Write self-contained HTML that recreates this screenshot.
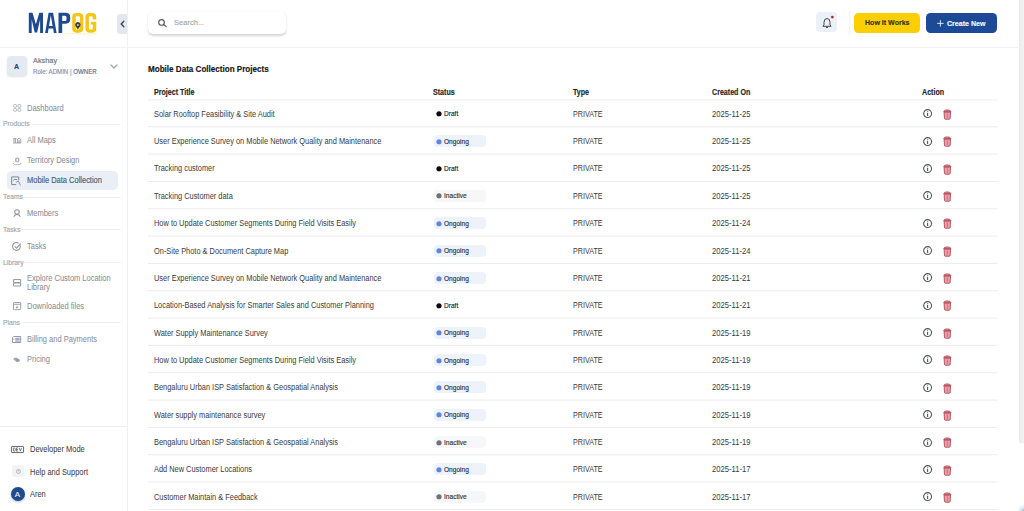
<!DOCTYPE html>
<html><head><meta charset="utf-8">
<style>
*{box-sizing:border-box;margin:0;padding:0}
html,body{width:1024px;height:511px;overflow:hidden;background:#fff;font-family:"Liberation Sans", sans-serif}
.a{position:absolute}
.t{position:absolute;white-space:nowrap;transform-origin:0 50%;-webkit-text-stroke:0.15px currentColor}
svg{overflow:visible}
</style></head><body>
<div class="a" style="left:127px;top:0;width:1px;height:511px;background:#f1f1f1"></div>
<div class="a" style="left:0;top:46.5px;width:127px;height:1px;background:#f2f2f2"></div>
<div class="a" style="left:128px;top:46.5px;width:890px;height:1px;background:#f2f2f2"></div>
<svg class="a" style="left:0;top:0" width="128" height="46" viewBox="0 0 128 46">
<path fill="#1f4a90" d="M28.8,33 L28.8,12.8 L32.5,12.8 L35.9,24.2 L39.3,12.8 L43,12.8 L43,33 L40.1,33 L40.1,19.5 L37.1,32.6 L34.7,32.6 L31.7,19.5 L31.7,33 Z"/>
<path fill="#1f4a90" fill-rule="evenodd" d="M45.1,33 L48.6,12.8 L53.1,12.8 L56.6,33 L53.8,33 L53.2,28.4 L48.5,28.4 L47.9,33 Z M49,26 L52.6,26 L50.8,15.3 Z"/>
<path fill="#1f4a90" fill-rule="evenodd" d="M58.5,33 V12.8 H65.7 Q70.2,12.8 70.2,17.4 V19.1 Q70.2,23.7 65.7,23.7 H62.2 V33 Z M62.2,15.7 H65 Q66.5,15.7 66.5,17.2 V19.4 Q66.5,20.9 65,20.9 H62.2 Z"/>
<path fill="#f5c518" fill-rule="evenodd" d="M76.3,13 H79.2 Q83.3,13 83.3,17.1 V28.6 Q83.3,32.7 79.2,32.7 H76.3 Q72.2,32.7 72.2,28.6 V17.1 Q72.2,13 76.3,13 Z M76.8,16.3 Q75.7,16.3 75.7,17.4 V28.3 Q75.7,29.4 76.8,29.4 H78.7 Q79.8,29.4 79.8,28.3 V17.4 Q79.8,16.3 78.7,16.3 Z"/>
<path fill="#f5c518" d="M96.3,19.5 V17.1 Q96.3,13 92.2,13 H89.5 Q85.4,13 85.4,17.1 V28.6 Q85.4,32.7 89.5,32.7 H92.2 Q96.3,32.7 96.3,28.6 V21.8 H90.8 V24.6 H92.8 V28.3 Q92.8,29.4 91.7,29.4 H90 Q88.9,29.4 88.9,28.3 V17.4 Q88.9,16.3 90,16.3 H91.7 Q92.8,16.3 92.8,17.4 V19.5 Z"/>
<path fill="#3c3c3c" d="M77.9,29.4 L75.6,26.3 A2.7,2.7 0 1 1 80.2,26.3 Z"/>
<circle cx="77.9" cy="24.9" r="0.95" fill="#d8d8d8"/>
<rect x="63" y="33.6" width="34" height="0.6" fill="#f3e3a0"/>
</svg>
<div class="a" style="left:117px;top:13.5px;width:10px;height:20px;background:#e3e7ef;border-radius:3px 0 0 3px"></div>
<svg class="a" style="left:119.5px;top:19.5px" width="5" height="8" viewBox="0 0 5 8"><path d="M3.8 1.2L1.2 4l2.6 2.8" stroke="#3c3f45" stroke-width="1.3" fill="none" stroke-linecap="round"/></svg>
<div class="a" style="left:6.9px;top:56px;width:20.6px;height:20px;border-radius:4px;background:#e5eaf2;box-shadow:0 1px 2px rgba(0,0,0,.12)"></div>
<div class="t" style="left:14.16px;top:63.24px;font-size:7.40px;line-height:7.40px;color:#2a4672;font-weight:bold;transform:scaleX(0.95);">A</div>
<div class="t" style="left:33.04px;top:56.58px;font-size:7.70px;line-height:7.70px;color:#6e727a;transform:scaleX(0.955);">Akshay</div>
<div class="t" style="left:33.12px;top:68.58px;font-size:6.40px;line-height:6.40px;color:#8c9097;transform:scaleX(0.955);">Role: ADMIN | <span style="color:#4a7196">OWNER</span></div>
<svg class="a" style="left:110px;top:63.8px" width="8" height="5" viewBox="0 0 8 5"><path d="M1 1l3 3 3-3" stroke="#a3a7ad" stroke-width="1.35" fill="none" stroke-linecap="round"/></svg>
<svg class="a" style="left:12.5px;top:104.2px" width="8.4" height="7.8" viewBox="0 0 8.4 7.8"><g fill="none" stroke="#9ea3aa" stroke-width="0.8"><rect x="0.6" y="0.5" width="2.9" height="2.8" rx="1"/><rect x="4.9" y="0.5" width="2.9" height="2.8" rx="1"/><rect x="0.6" y="4.5" width="2.9" height="2.8" rx="1"/><rect x="4.9" y="4.5" width="2.9" height="2.8" rx="1"/></g></svg>
<div class="t" style="left:26.76px;top:104.66px;font-size:8.20px;line-height:8.20px;color:#8a8e94;transform:scaleX(0.915);-webkit-text-stroke:0.05px currentColor;">Dashboard</div>
<div class="t" style="left:3.47px;top:121.49px;font-size:7.10px;line-height:7.10px;color:#a3a7ad;transform:scaleX(0.955);">Products</div>
<div class="a" style="left:32px;top:124.0px;width:88.6px;height:1px;background:#efefef"></div>
<svg class="a" style="left:12.6px;top:137.4px" width="8.4" height="6.4" viewBox="0 0 8.4 6.4"><g fill="none" stroke="#8f949b" stroke-width="0.8"><path d="M0.2 6h8M0.3 1.7h3.2M1 1.7v4.3M2.5 1.7v4.3M4.5 2.2v3.8M7.8 2.2v3.8M4.3 2.4q1.9-2.6 3.7 0"/><path d="M5.7 3.4v2.6M6.6 3.4v2.6" stroke-width="0.6"/></g></svg>
<div class="t" style="left:26.76px;top:137.06px;font-size:8.20px;line-height:8.20px;color:#8a8e94;transform:scaleX(0.915);-webkit-text-stroke:0.05px currentColor;">All Maps</div>
<svg class="a" style="left:12.7px;top:156.5px" width="8.4" height="8" viewBox="0 0 8.4 8"><g fill="#b0b4ba"><circle cx="4.2" cy="3" r="2.4"/></g><circle cx="4.2" cy="3" r="0.9" fill="#fff"/><path d="M1.3 5.6c-1.6 0.8-0.9 2.2 2.9 2.2s4.5-1.4 2.9-2.2" fill="none" stroke="#a8acb2" stroke-width="0.9"/></svg>
<div class="t" style="left:26.76px;top:157.06px;font-size:8.20px;line-height:8.20px;color:#8a8e94;transform:scaleX(0.915);-webkit-text-stroke:0.05px currentColor;">Territory Design</div>
<div class="a" style="left:6.9px;top:171px;width:111.2px;height:19.4px;border-radius:4.5px;background:#eaeff6"></div>
<svg class="a" style="left:11px;top:175.5px" width="11" height="10" viewBox="0 0 11 10"><g fill="none" stroke="#7d8799" stroke-width="1"><path d="M5.2 8.6H0.7V0.9h7v3.6"/><path d="M2.3 4.3l1.6-0.9 2.2 0.3"/><path d="M5.3 6.6l1.4-1.6 1.6 1.4v1.5l1.6 1.5"/></g></svg>
<div class="t" style="left:26.76px;top:176.86px;font-size:8.20px;line-height:8.20px;color:#465e80;transform:scaleX(0.915);">Mobile Data Collection</div>
<div class="t" style="left:3.47px;top:194.09px;font-size:7.10px;line-height:7.10px;color:#a3a7ad;transform:scaleX(0.955);">Teams</div>
<div class="a" style="left:24.4px;top:196.5px;width:96.19999999999999px;height:1px;background:#efefef"></div>
<svg class="a" style="left:12.5px;top:209px" width="8.2" height="8.2" viewBox="0 0 8.2 8.2"><g fill="none" stroke="#8e9298" stroke-width="1.05"><circle cx="4" cy="3.1" r="2.3"/><path d="M0.8 7.8q0.9-2.2 3.2-2.4t3.4 2.4"/></g></svg>
<div class="t" style="left:26.76px;top:209.66px;font-size:8.20px;line-height:8.20px;color:#8a8e94;transform:scaleX(0.915);-webkit-text-stroke:0.05px currentColor;">Members</div>
<div class="t" style="left:3.47px;top:226.89px;font-size:7.10px;line-height:7.10px;color:#a3a7ad;transform:scaleX(0.955);">Tasks</div>
<div class="a" style="left:20.6px;top:228.9px;width:100.0px;height:1px;background:#efefef"></div>
<svg class="a" style="left:11.9px;top:241.9px" width="9.4" height="8.8" viewBox="0 0 9.4 8.8"><g fill="none" stroke="#8f949b" stroke-width="1.1"><path d="M8.2 3.4A3.9 3.9 0 1 1 6.6 1.2"/><path d="M2.8 4.4l1.7 1.7 4.2-4.4"/></g></svg>
<div class="t" style="left:26.76px;top:243.16px;font-size:8.20px;line-height:8.20px;color:#8a8e94;transform:scaleX(0.915);-webkit-text-stroke:0.05px currentColor;">Tasks</div>
<div class="t" style="left:3.47px;top:259.69px;font-size:7.10px;line-height:7.10px;color:#a3a7ad;transform:scaleX(0.955);">Library</div>
<div class="a" style="left:24.4px;top:261.75px;width:96.19999999999999px;height:1px;background:#efefef"></div>
<svg class="a" style="left:12.5px;top:279px" width="8.2" height="7.6" viewBox="0 0 8.2 7.6"><g fill="none" stroke="#959aa1" stroke-width="1.05"><rect x="0.5" y="0.5" width="7.2" height="3" rx="0.9"/><rect x="0.5" y="4.1" width="7.2" height="3" rx="0.9"/></g></svg>
<div class="t" style="left:26.76px;top:274.96px;font-size:8.20px;line-height:8.20px;color:#8a8e94;transform:scaleX(0.915);-webkit-text-stroke:0.05px currentColor;">Explore Custom Location</div>
<div class="t" style="left:26.76px;top:283.76px;font-size:8.20px;line-height:8.20px;color:#8a8e94;transform:scaleX(0.915);-webkit-text-stroke:0.05px currentColor;">Library</div>
<svg class="a" style="left:12.5px;top:302.2px" width="8.2" height="8.2" viewBox="0 0 8.2 8.2"><g fill="none" stroke="#989da4" stroke-width="0.95"><rect x="0.5" y="0.5" width="7.2" height="7.2" rx="0.6"/><path d="M0.5 2.3h7.2M4.1 3.6v2.6M3 5.1l1.1 1.1 1.1-1.1"/></g></svg>
<div class="t" style="left:26.76px;top:302.66px;font-size:8.20px;line-height:8.20px;color:#8a8e94;transform:scaleX(0.915);-webkit-text-stroke:0.05px currentColor;">Downloaded files</div>
<div class="t" style="left:3.47px;top:319.99px;font-size:7.10px;line-height:7.10px;color:#a3a7ad;transform:scaleX(0.955);">Plans</div>
<div class="a" style="left:22.5px;top:322.25px;width:98.1px;height:1px;background:#efefef"></div>
<svg class="a" style="left:11.9px;top:335.9px" width="9.2" height="7" viewBox="0 0 9.2 7"><g fill="none" stroke="#878ba6" stroke-width="0.9"><path d="M0.5 1.6V6.5h8.2V0.5H2"/><path d="M0.5 1.6L1.8 0.5M3.3 2.3h4.4M3.3 3.7h4.4M3.3 5.1h4.4M1.2 3.2h1.2"/></g></svg>
<div class="t" style="left:26.76px;top:336.16px;font-size:8.20px;line-height:8.20px;color:#8a8e94;transform:scaleX(0.915);-webkit-text-stroke:0.05px currentColor;">Billing and Payments</div>
<svg class="a" style="left:13px;top:356.5px" width="7.2" height="5.2" viewBox="0 0 7.2 5.2"><g fill="#a8acb2"><ellipse cx="2.8" cy="2" rx="2.4" ry="1.6"/><ellipse cx="4.6" cy="3.3" rx="2.4" ry="1.6" fill="#9a9ea4"/></g></svg>
<div class="t" style="left:26.76px;top:355.86px;font-size:8.20px;line-height:8.20px;color:#8a8e94;transform:scaleX(0.915);-webkit-text-stroke:0.05px currentColor;">Pricing</div>
<div class="a" style="left:0;top:426.3px;width:127px;height:1px;background:#efefef"></div>
<svg class="a" style="left:11.3px;top:445.6px" width="13" height="7" viewBox="0 0 13 7"><g fill="none" stroke="#55575b" stroke-width="0.9"><rect x="0.45" y="0.45" width="12.1" height="6.1" rx="0.6"/><path d="M2.4 1.9v3.2h0.9q1.1 0 1.1-1.6t-1.1-1.6z M7.1 1.9H5.5v3.2h1.6M5.5 3.5h1.4 M8.3 1.9l1.1 3.2 1.1-3.2" stroke-width="0.75"/></g></svg>
<div class="t" style="left:29.51px;top:445.76px;font-size:8.20px;line-height:8.20px;color:#3f4145;transform:scaleX(0.91);-webkit-text-stroke:0.05px currentColor;">Developer Mode</div>
<div class="a" style="left:12px;top:465.3px;width:12px;height:12px;border-radius:2.5px;background:#f2f3f5"></div>
<svg class="a" style="left:15.6px;top:468.9px" width="4.8" height="4.8" viewBox="0 0 4.8 4.8"><g fill="none" stroke="#9a9ea4" stroke-width="0.7"><circle cx="2.4" cy="2.4" r="2"/><path d="M2.4 1.1v1.4"/></g></svg>
<div class="t" style="left:29.51px;top:468.66px;font-size:8.20px;line-height:8.20px;color:#3f4145;transform:scaleX(0.91);-webkit-text-stroke:0.05px currentColor;">Help and Support</div>
<div class="a" style="left:11.3px;top:487.3px;width:14px;height:14px;border-radius:50%;background:#1f4a8c;box-shadow:0 1px 2.5px rgba(31,74,140,.35)"></div>
<div class="t" style="left:14.82px;top:491.03px;font-size:8.00px;line-height:8.00px;color:#e6ecf5;">A</div>
<div class="t" style="left:30.11px;top:490.86px;font-size:8.20px;line-height:8.20px;color:#3e4044;transform:scaleX(0.91);-webkit-text-stroke:0.05px currentColor;">Aren</div>
<div class="a" style="left:147.8px;top:12.25px;width:138.2px;height:22.2px;border-radius:5px;background:#fff;box-shadow:0 1.2px 2.2px rgba(0,0,0,.16),0 0 0.6px rgba(0,0,0,.08)"></div>
<svg class="a" style="left:158px;top:19.3px" width="9" height="8" viewBox="0 0 9 8"><g fill="none" stroke="#55585e" stroke-width="1.15"><circle cx="3.5" cy="3.4" r="2.8"/><path d="M5.6 5.5L8.2 7.6" stroke-linecap="round"/></g></svg>
<div class="t" style="left:173.93px;top:19.31px;font-size:7.90px;line-height:7.90px;color:#a3a6ab;transform:scaleX(0.955);">Search...</div>
<div class="a" style="left:816.4px;top:12.4px;width:21.1px;height:20px;border-radius:4px;background:#ecf0f9"></div>
<svg class="a" style="left:822px;top:17.2px" width="10" height="11" viewBox="0 0 10 11"><g fill="none" stroke="#45484e" stroke-width="1" stroke-linejoin="round"><path d="M0.9 9.3L2 7.9V5.4Q2 1.5 5 1.5Q8 1.5 8 5.4V7.9L9.1 9.3Z"/><path d="M4 10.3Q5 11 6 10.3"/></g></svg>
<svg class="a" style="left:830px;top:15px" width="5" height="5" viewBox="0 0 5 5"><circle cx="2.35" cy="2.1" r="1.4" fill="#a8283f"/></svg>
<div class="a" style="left:848.5px;top:10.7px;width:0.8px;height:24px;background:#f1f1f1"></div>
<div class="a" style="left:854px;top:13px;width:66.2px;height:19.7px;border-radius:4.5px;background:#fdcf02"></div>
<div class="t" style="left:864.65px;top:19.25px;font-size:7.50px;line-height:7.50px;color:#33302a;font-weight:bold;transform:scaleX(0.94);">How It Works</div>
<div class="a" style="left:926.1px;top:12.6px;width:70.6px;height:20.3px;border-radius:4.5px;background:#1c4a97"></div>
<svg class="a" style="left:937.2px;top:19.5px" width="6.8" height="6.8" viewBox="0 0 6.8 6.8"><path d="M3.4 0.2v6.4M0.2 3.4h6.4" stroke="#e8eef8" stroke-width="0.9"/></svg>
<div class="t" style="left:947.45px;top:19.55px;font-size:7.50px;line-height:7.50px;color:#f4f7fc;font-weight:bold;transform:scaleX(0.94);">Create New</div>
<div class="t" style="left:148.29px;top:64.60px;font-size:8.50px;line-height:8.50px;color:#161616;font-weight:bold;transform:scaleX(0.95);">Mobile Data Collection Projects</div>
<div class="t" style="left:153.51px;top:88.66px;font-size:8.20px;line-height:8.20px;color:#262626;font-weight:bold;transform:scaleX(0.868);">Project Title</div>
<div class="t" style="left:433.21px;top:88.66px;font-size:8.20px;line-height:8.20px;color:#262626;font-weight:bold;transform:scaleX(0.868);">Status</div>
<div class="t" style="left:572.81px;top:88.66px;font-size:8.20px;line-height:8.20px;color:#262626;font-weight:bold;transform:scaleX(0.868);">Type</div>
<div class="t" style="left:712.21px;top:88.66px;font-size:8.20px;line-height:8.20px;color:#262626;font-weight:bold;transform:scaleX(0.868);">Created On</div>
<div class="t" style="left:921.71px;top:88.66px;font-size:8.20px;line-height:8.20px;color:#262626;font-weight:bold;transform:scaleX(0.868);">Action</div>
<div class="t" style="left:153.50px;top:109.77px;font-size:8.30px;line-height:8.30px;color:#3a3a3a;transform:scaleX(0.893);-webkit-text-stroke:0px currentColor;">Solar Rooftop Feasibility &amp; Site Audit</div>
<svg class="a" style="left:436px;top:111.40px" width="6" height="6" viewBox="0 0 6 6"><circle cx="3" cy="2.75" r="2.6" fill="#0a0a0a"/></svg>
<div class="t" style="left:444.16px;top:110.38px;font-size:7.35px;line-height:7.35px;color:#1a1a1a;transform:scaleX(0.895);">Draft</div>
<div class="t" style="left:572.80px;top:109.77px;font-size:8.30px;line-height:8.30px;color:#3a3a3a;transform:scaleX(0.862);-webkit-text-stroke:0px currentColor;">PRIVATE</div>
<div class="t" style="left:712.20px;top:109.77px;font-size:8.30px;line-height:8.30px;color:#3a3a3a;transform:scaleX(0.92);-webkit-text-stroke:0px currentColor;">2025-11-25</div>
<svg class="a" style="left:922.9px;top:109.20px" width="9.2" height="9.2" viewBox="0 0 9.2 9.2"><g fill="none" stroke="#505358" stroke-width="1.1"><circle cx="4.6" cy="4.6" r="3.95"/><path d="M4.6 4.1v2.8"/></g><circle cx="4.6" cy="2.75" r="0.6" fill="#505358"/></svg>
<svg class="a" style="left:942.6px;top:108.90px" width="8.6" height="10.6" viewBox="0 0 8.6 10.6"><path d="M0.7 2.7Q0.9 0.9 4.3 0.9Q7.7 0.9 7.9 2.7Z" fill="#d88893" stroke="#ad4453" stroke-width="0.85" stroke-linejoin="round"/><path d="M1.1 3.1H7.5L7.1 9.5Q7 10.2 6.3 10.2H2.3Q1.6 10.2 1.5 9.5Z" fill="#eaa2ab" stroke="#b44a5a" stroke-width="0.95" stroke-linejoin="round"/><path d="M4.3 4.4V8.9" stroke="#c86473" stroke-width="0.9"/></svg>
<div class="t" style="left:153.50px;top:137.13px;font-size:8.30px;line-height:8.30px;color:#3a3a3a;transform:scaleX(0.893);-webkit-text-stroke:0px currentColor;">User Experience Survey on Mobile Network Quality and Maintenance</div>
<div class="a" style="left:433.8px;top:135.16px;width:52px;height:12px;border-radius:4px;background:#eef2fb"></div>
<svg class="a" style="left:436px;top:138.76px" width="6" height="6" viewBox="0 0 6 6"><circle cx="3" cy="2.75" r="2.6" fill="#5b88dc"/></svg>
<div class="t" style="left:444.16px;top:137.74px;font-size:7.35px;line-height:7.35px;color:#2a3242;transform:scaleX(0.895);">Ongoing</div>
<div class="t" style="left:572.80px;top:137.13px;font-size:8.30px;line-height:8.30px;color:#3a3a3a;transform:scaleX(0.862);-webkit-text-stroke:0px currentColor;">PRIVATE</div>
<div class="t" style="left:712.20px;top:137.13px;font-size:8.30px;line-height:8.30px;color:#3a3a3a;transform:scaleX(0.92);-webkit-text-stroke:0px currentColor;">2025-11-25</div>
<svg class="a" style="left:922.9px;top:136.56px" width="9.2" height="9.2" viewBox="0 0 9.2 9.2"><g fill="none" stroke="#505358" stroke-width="1.1"><circle cx="4.6" cy="4.6" r="3.95"/><path d="M4.6 4.1v2.8"/></g><circle cx="4.6" cy="2.75" r="0.6" fill="#505358"/></svg>
<svg class="a" style="left:942.6px;top:136.26px" width="8.6" height="10.6" viewBox="0 0 8.6 10.6"><path d="M0.7 2.7Q0.9 0.9 4.3 0.9Q7.7 0.9 7.9 2.7Z" fill="#d88893" stroke="#ad4453" stroke-width="0.85" stroke-linejoin="round"/><path d="M1.1 3.1H7.5L7.1 9.5Q7 10.2 6.3 10.2H2.3Q1.6 10.2 1.5 9.5Z" fill="#eaa2ab" stroke="#b44a5a" stroke-width="0.95" stroke-linejoin="round"/><path d="M4.3 4.4V8.9" stroke="#c86473" stroke-width="0.9"/></svg>
<div class="t" style="left:153.50px;top:164.49px;font-size:8.30px;line-height:8.30px;color:#3a3a3a;transform:scaleX(0.893);-webkit-text-stroke:0px currentColor;">Tracking customer</div>
<svg class="a" style="left:436px;top:166.12px" width="6" height="6" viewBox="0 0 6 6"><circle cx="3" cy="2.75" r="2.6" fill="#0a0a0a"/></svg>
<div class="t" style="left:444.16px;top:165.10px;font-size:7.35px;line-height:7.35px;color:#1a1a1a;transform:scaleX(0.895);">Draft</div>
<div class="t" style="left:572.80px;top:164.49px;font-size:8.30px;line-height:8.30px;color:#3a3a3a;transform:scaleX(0.862);-webkit-text-stroke:0px currentColor;">PRIVATE</div>
<div class="t" style="left:712.20px;top:164.49px;font-size:8.30px;line-height:8.30px;color:#3a3a3a;transform:scaleX(0.92);-webkit-text-stroke:0px currentColor;">2025-11-25</div>
<svg class="a" style="left:922.9px;top:163.92px" width="9.2" height="9.2" viewBox="0 0 9.2 9.2"><g fill="none" stroke="#505358" stroke-width="1.1"><circle cx="4.6" cy="4.6" r="3.95"/><path d="M4.6 4.1v2.8"/></g><circle cx="4.6" cy="2.75" r="0.6" fill="#505358"/></svg>
<svg class="a" style="left:942.6px;top:163.62px" width="8.6" height="10.6" viewBox="0 0 8.6 10.6"><path d="M0.7 2.7Q0.9 0.9 4.3 0.9Q7.7 0.9 7.9 2.7Z" fill="#d88893" stroke="#ad4453" stroke-width="0.85" stroke-linejoin="round"/><path d="M1.1 3.1H7.5L7.1 9.5Q7 10.2 6.3 10.2H2.3Q1.6 10.2 1.5 9.5Z" fill="#eaa2ab" stroke="#b44a5a" stroke-width="0.95" stroke-linejoin="round"/><path d="M4.3 4.4V8.9" stroke="#c86473" stroke-width="0.9"/></svg>
<div class="t" style="left:153.50px;top:191.85px;font-size:8.30px;line-height:8.30px;color:#3a3a3a;transform:scaleX(0.893);-webkit-text-stroke:0px currentColor;">Tracking Customer data</div>
<div class="a" style="left:433.8px;top:189.88px;width:52px;height:12px;border-radius:4px;background:#f6f7f9"></div>
<svg class="a" style="left:436px;top:193.48px" width="6" height="6" viewBox="0 0 6 6"><circle cx="3" cy="2.75" r="2.6" fill="#6d7178"/></svg>
<div class="t" style="left:444.16px;top:192.46px;font-size:7.35px;line-height:7.35px;color:#333;transform:scaleX(0.895);">Inactive</div>
<div class="t" style="left:572.80px;top:191.85px;font-size:8.30px;line-height:8.30px;color:#3a3a3a;transform:scaleX(0.862);-webkit-text-stroke:0px currentColor;">PRIVATE</div>
<div class="t" style="left:712.20px;top:191.85px;font-size:8.30px;line-height:8.30px;color:#3a3a3a;transform:scaleX(0.92);-webkit-text-stroke:0px currentColor;">2025-11-25</div>
<svg class="a" style="left:922.9px;top:191.28px" width="9.2" height="9.2" viewBox="0 0 9.2 9.2"><g fill="none" stroke="#505358" stroke-width="1.1"><circle cx="4.6" cy="4.6" r="3.95"/><path d="M4.6 4.1v2.8"/></g><circle cx="4.6" cy="2.75" r="0.6" fill="#505358"/></svg>
<svg class="a" style="left:942.6px;top:190.98px" width="8.6" height="10.6" viewBox="0 0 8.6 10.6"><path d="M0.7 2.7Q0.9 0.9 4.3 0.9Q7.7 0.9 7.9 2.7Z" fill="#d88893" stroke="#ad4453" stroke-width="0.85" stroke-linejoin="round"/><path d="M1.1 3.1H7.5L7.1 9.5Q7 10.2 6.3 10.2H2.3Q1.6 10.2 1.5 9.5Z" fill="#eaa2ab" stroke="#b44a5a" stroke-width="0.95" stroke-linejoin="round"/><path d="M4.3 4.4V8.9" stroke="#c86473" stroke-width="0.9"/></svg>
<div class="t" style="left:153.50px;top:219.21px;font-size:8.30px;line-height:8.30px;color:#3a3a3a;transform:scaleX(0.893);-webkit-text-stroke:0px currentColor;">How to Update Customer Segments During Field Visits Easily</div>
<div class="a" style="left:433.8px;top:217.24px;width:52px;height:12px;border-radius:4px;background:#eef2fb"></div>
<svg class="a" style="left:436px;top:220.84px" width="6" height="6" viewBox="0 0 6 6"><circle cx="3" cy="2.75" r="2.6" fill="#5b88dc"/></svg>
<div class="t" style="left:444.16px;top:219.82px;font-size:7.35px;line-height:7.35px;color:#2a3242;transform:scaleX(0.895);">Ongoing</div>
<div class="t" style="left:572.80px;top:219.21px;font-size:8.30px;line-height:8.30px;color:#3a3a3a;transform:scaleX(0.862);-webkit-text-stroke:0px currentColor;">PRIVATE</div>
<div class="t" style="left:712.20px;top:219.21px;font-size:8.30px;line-height:8.30px;color:#3a3a3a;transform:scaleX(0.92);-webkit-text-stroke:0px currentColor;">2025-11-24</div>
<svg class="a" style="left:922.9px;top:218.64px" width="9.2" height="9.2" viewBox="0 0 9.2 9.2"><g fill="none" stroke="#505358" stroke-width="1.1"><circle cx="4.6" cy="4.6" r="3.95"/><path d="M4.6 4.1v2.8"/></g><circle cx="4.6" cy="2.75" r="0.6" fill="#505358"/></svg>
<svg class="a" style="left:942.6px;top:218.34px" width="8.6" height="10.6" viewBox="0 0 8.6 10.6"><path d="M0.7 2.7Q0.9 0.9 4.3 0.9Q7.7 0.9 7.9 2.7Z" fill="#d88893" stroke="#ad4453" stroke-width="0.85" stroke-linejoin="round"/><path d="M1.1 3.1H7.5L7.1 9.5Q7 10.2 6.3 10.2H2.3Q1.6 10.2 1.5 9.5Z" fill="#eaa2ab" stroke="#b44a5a" stroke-width="0.95" stroke-linejoin="round"/><path d="M4.3 4.4V8.9" stroke="#c86473" stroke-width="0.9"/></svg>
<div class="t" style="left:153.50px;top:246.57px;font-size:8.30px;line-height:8.30px;color:#3a3a3a;transform:scaleX(0.893);-webkit-text-stroke:0px currentColor;">On-Site Photo &amp; Document Capture Map</div>
<div class="a" style="left:433.8px;top:244.60px;width:52px;height:12px;border-radius:4px;background:#eef2fb"></div>
<svg class="a" style="left:436px;top:248.20px" width="6" height="6" viewBox="0 0 6 6"><circle cx="3" cy="2.75" r="2.6" fill="#5b88dc"/></svg>
<div class="t" style="left:444.16px;top:247.18px;font-size:7.35px;line-height:7.35px;color:#2a3242;transform:scaleX(0.895);">Ongoing</div>
<div class="t" style="left:572.80px;top:246.57px;font-size:8.30px;line-height:8.30px;color:#3a3a3a;transform:scaleX(0.862);-webkit-text-stroke:0px currentColor;">PRIVATE</div>
<div class="t" style="left:712.20px;top:246.57px;font-size:8.30px;line-height:8.30px;color:#3a3a3a;transform:scaleX(0.92);-webkit-text-stroke:0px currentColor;">2025-11-24</div>
<svg class="a" style="left:922.9px;top:246.00px" width="9.2" height="9.2" viewBox="0 0 9.2 9.2"><g fill="none" stroke="#505358" stroke-width="1.1"><circle cx="4.6" cy="4.6" r="3.95"/><path d="M4.6 4.1v2.8"/></g><circle cx="4.6" cy="2.75" r="0.6" fill="#505358"/></svg>
<svg class="a" style="left:942.6px;top:245.70px" width="8.6" height="10.6" viewBox="0 0 8.6 10.6"><path d="M0.7 2.7Q0.9 0.9 4.3 0.9Q7.7 0.9 7.9 2.7Z" fill="#d88893" stroke="#ad4453" stroke-width="0.85" stroke-linejoin="round"/><path d="M1.1 3.1H7.5L7.1 9.5Q7 10.2 6.3 10.2H2.3Q1.6 10.2 1.5 9.5Z" fill="#eaa2ab" stroke="#b44a5a" stroke-width="0.95" stroke-linejoin="round"/><path d="M4.3 4.4V8.9" stroke="#c86473" stroke-width="0.9"/></svg>
<div class="t" style="left:153.50px;top:273.93px;font-size:8.30px;line-height:8.30px;color:#3a3a3a;transform:scaleX(0.893);-webkit-text-stroke:0px currentColor;">User Experience Survey on Mobile Network Quality and Maintenance</div>
<div class="a" style="left:433.8px;top:271.96px;width:52px;height:12px;border-radius:4px;background:#eef2fb"></div>
<svg class="a" style="left:436px;top:275.56px" width="6" height="6" viewBox="0 0 6 6"><circle cx="3" cy="2.75" r="2.6" fill="#5b88dc"/></svg>
<div class="t" style="left:444.16px;top:274.54px;font-size:7.35px;line-height:7.35px;color:#2a3242;transform:scaleX(0.895);">Ongoing</div>
<div class="t" style="left:572.80px;top:273.93px;font-size:8.30px;line-height:8.30px;color:#3a3a3a;transform:scaleX(0.862);-webkit-text-stroke:0px currentColor;">PRIVATE</div>
<div class="t" style="left:712.20px;top:273.93px;font-size:8.30px;line-height:8.30px;color:#3a3a3a;transform:scaleX(0.92);-webkit-text-stroke:0px currentColor;">2025-11-21</div>
<svg class="a" style="left:922.9px;top:273.36px" width="9.2" height="9.2" viewBox="0 0 9.2 9.2"><g fill="none" stroke="#505358" stroke-width="1.1"><circle cx="4.6" cy="4.6" r="3.95"/><path d="M4.6 4.1v2.8"/></g><circle cx="4.6" cy="2.75" r="0.6" fill="#505358"/></svg>
<svg class="a" style="left:942.6px;top:273.06px" width="8.6" height="10.6" viewBox="0 0 8.6 10.6"><path d="M0.7 2.7Q0.9 0.9 4.3 0.9Q7.7 0.9 7.9 2.7Z" fill="#d88893" stroke="#ad4453" stroke-width="0.85" stroke-linejoin="round"/><path d="M1.1 3.1H7.5L7.1 9.5Q7 10.2 6.3 10.2H2.3Q1.6 10.2 1.5 9.5Z" fill="#eaa2ab" stroke="#b44a5a" stroke-width="0.95" stroke-linejoin="round"/><path d="M4.3 4.4V8.9" stroke="#c86473" stroke-width="0.9"/></svg>
<div class="t" style="left:153.50px;top:301.29px;font-size:8.30px;line-height:8.30px;color:#3a3a3a;transform:scaleX(0.893);-webkit-text-stroke:0px currentColor;">Location-Based Analysis for Smarter Sales and Customer Planning</div>
<svg class="a" style="left:436px;top:302.92px" width="6" height="6" viewBox="0 0 6 6"><circle cx="3" cy="2.75" r="2.6" fill="#0a0a0a"/></svg>
<div class="t" style="left:444.16px;top:301.90px;font-size:7.35px;line-height:7.35px;color:#1a1a1a;transform:scaleX(0.895);">Draft</div>
<div class="t" style="left:572.80px;top:301.29px;font-size:8.30px;line-height:8.30px;color:#3a3a3a;transform:scaleX(0.862);-webkit-text-stroke:0px currentColor;">PRIVATE</div>
<div class="t" style="left:712.20px;top:301.29px;font-size:8.30px;line-height:8.30px;color:#3a3a3a;transform:scaleX(0.92);-webkit-text-stroke:0px currentColor;">2025-11-21</div>
<svg class="a" style="left:922.9px;top:300.72px" width="9.2" height="9.2" viewBox="0 0 9.2 9.2"><g fill="none" stroke="#505358" stroke-width="1.1"><circle cx="4.6" cy="4.6" r="3.95"/><path d="M4.6 4.1v2.8"/></g><circle cx="4.6" cy="2.75" r="0.6" fill="#505358"/></svg>
<svg class="a" style="left:942.6px;top:300.42px" width="8.6" height="10.6" viewBox="0 0 8.6 10.6"><path d="M0.7 2.7Q0.9 0.9 4.3 0.9Q7.7 0.9 7.9 2.7Z" fill="#d88893" stroke="#ad4453" stroke-width="0.85" stroke-linejoin="round"/><path d="M1.1 3.1H7.5L7.1 9.5Q7 10.2 6.3 10.2H2.3Q1.6 10.2 1.5 9.5Z" fill="#eaa2ab" stroke="#b44a5a" stroke-width="0.95" stroke-linejoin="round"/><path d="M4.3 4.4V8.9" stroke="#c86473" stroke-width="0.9"/></svg>
<div class="t" style="left:153.50px;top:328.65px;font-size:8.30px;line-height:8.30px;color:#3a3a3a;transform:scaleX(0.893);-webkit-text-stroke:0px currentColor;">Water Supply Maintenance Survey</div>
<div class="a" style="left:433.8px;top:326.68px;width:52px;height:12px;border-radius:4px;background:#eef2fb"></div>
<svg class="a" style="left:436px;top:330.28px" width="6" height="6" viewBox="0 0 6 6"><circle cx="3" cy="2.75" r="2.6" fill="#5b88dc"/></svg>
<div class="t" style="left:444.16px;top:329.26px;font-size:7.35px;line-height:7.35px;color:#2a3242;transform:scaleX(0.895);">Ongoing</div>
<div class="t" style="left:572.80px;top:328.65px;font-size:8.30px;line-height:8.30px;color:#3a3a3a;transform:scaleX(0.862);-webkit-text-stroke:0px currentColor;">PRIVATE</div>
<div class="t" style="left:712.20px;top:328.65px;font-size:8.30px;line-height:8.30px;color:#3a3a3a;transform:scaleX(0.92);-webkit-text-stroke:0px currentColor;">2025-11-19</div>
<svg class="a" style="left:922.9px;top:328.08px" width="9.2" height="9.2" viewBox="0 0 9.2 9.2"><g fill="none" stroke="#505358" stroke-width="1.1"><circle cx="4.6" cy="4.6" r="3.95"/><path d="M4.6 4.1v2.8"/></g><circle cx="4.6" cy="2.75" r="0.6" fill="#505358"/></svg>
<svg class="a" style="left:942.6px;top:327.78px" width="8.6" height="10.6" viewBox="0 0 8.6 10.6"><path d="M0.7 2.7Q0.9 0.9 4.3 0.9Q7.7 0.9 7.9 2.7Z" fill="#d88893" stroke="#ad4453" stroke-width="0.85" stroke-linejoin="round"/><path d="M1.1 3.1H7.5L7.1 9.5Q7 10.2 6.3 10.2H2.3Q1.6 10.2 1.5 9.5Z" fill="#eaa2ab" stroke="#b44a5a" stroke-width="0.95" stroke-linejoin="round"/><path d="M4.3 4.4V8.9" stroke="#c86473" stroke-width="0.9"/></svg>
<div class="t" style="left:153.50px;top:356.01px;font-size:8.30px;line-height:8.30px;color:#3a3a3a;transform:scaleX(0.893);-webkit-text-stroke:0px currentColor;">How to Update Customer Segments During Field Visits Easily</div>
<div class="a" style="left:433.8px;top:354.04px;width:52px;height:12px;border-radius:4px;background:#eef2fb"></div>
<svg class="a" style="left:436px;top:357.64px" width="6" height="6" viewBox="0 0 6 6"><circle cx="3" cy="2.75" r="2.6" fill="#5b88dc"/></svg>
<div class="t" style="left:444.16px;top:356.62px;font-size:7.35px;line-height:7.35px;color:#2a3242;transform:scaleX(0.895);">Ongoing</div>
<div class="t" style="left:572.80px;top:356.01px;font-size:8.30px;line-height:8.30px;color:#3a3a3a;transform:scaleX(0.862);-webkit-text-stroke:0px currentColor;">PRIVATE</div>
<div class="t" style="left:712.20px;top:356.01px;font-size:8.30px;line-height:8.30px;color:#3a3a3a;transform:scaleX(0.92);-webkit-text-stroke:0px currentColor;">2025-11-19</div>
<svg class="a" style="left:922.9px;top:355.44px" width="9.2" height="9.2" viewBox="0 0 9.2 9.2"><g fill="none" stroke="#505358" stroke-width="1.1"><circle cx="4.6" cy="4.6" r="3.95"/><path d="M4.6 4.1v2.8"/></g><circle cx="4.6" cy="2.75" r="0.6" fill="#505358"/></svg>
<svg class="a" style="left:942.6px;top:355.14px" width="8.6" height="10.6" viewBox="0 0 8.6 10.6"><path d="M0.7 2.7Q0.9 0.9 4.3 0.9Q7.7 0.9 7.9 2.7Z" fill="#d88893" stroke="#ad4453" stroke-width="0.85" stroke-linejoin="round"/><path d="M1.1 3.1H7.5L7.1 9.5Q7 10.2 6.3 10.2H2.3Q1.6 10.2 1.5 9.5Z" fill="#eaa2ab" stroke="#b44a5a" stroke-width="0.95" stroke-linejoin="round"/><path d="M4.3 4.4V8.9" stroke="#c86473" stroke-width="0.9"/></svg>
<div class="t" style="left:153.50px;top:383.37px;font-size:8.30px;line-height:8.30px;color:#3a3a3a;transform:scaleX(0.893);-webkit-text-stroke:0px currentColor;">Bengaluru Urban ISP Satisfaction &amp; Geospatial Analysis</div>
<div class="a" style="left:433.8px;top:381.40px;width:52px;height:12px;border-radius:4px;background:#eef2fb"></div>
<svg class="a" style="left:436px;top:385.00px" width="6" height="6" viewBox="0 0 6 6"><circle cx="3" cy="2.75" r="2.6" fill="#5b88dc"/></svg>
<div class="t" style="left:444.16px;top:383.98px;font-size:7.35px;line-height:7.35px;color:#2a3242;transform:scaleX(0.895);">Ongoing</div>
<div class="t" style="left:572.80px;top:383.37px;font-size:8.30px;line-height:8.30px;color:#3a3a3a;transform:scaleX(0.862);-webkit-text-stroke:0px currentColor;">PRIVATE</div>
<div class="t" style="left:712.20px;top:383.37px;font-size:8.30px;line-height:8.30px;color:#3a3a3a;transform:scaleX(0.92);-webkit-text-stroke:0px currentColor;">2025-11-19</div>
<svg class="a" style="left:922.9px;top:382.80px" width="9.2" height="9.2" viewBox="0 0 9.2 9.2"><g fill="none" stroke="#505358" stroke-width="1.1"><circle cx="4.6" cy="4.6" r="3.95"/><path d="M4.6 4.1v2.8"/></g><circle cx="4.6" cy="2.75" r="0.6" fill="#505358"/></svg>
<svg class="a" style="left:942.6px;top:382.50px" width="8.6" height="10.6" viewBox="0 0 8.6 10.6"><path d="M0.7 2.7Q0.9 0.9 4.3 0.9Q7.7 0.9 7.9 2.7Z" fill="#d88893" stroke="#ad4453" stroke-width="0.85" stroke-linejoin="round"/><path d="M1.1 3.1H7.5L7.1 9.5Q7 10.2 6.3 10.2H2.3Q1.6 10.2 1.5 9.5Z" fill="#eaa2ab" stroke="#b44a5a" stroke-width="0.95" stroke-linejoin="round"/><path d="M4.3 4.4V8.9" stroke="#c86473" stroke-width="0.9"/></svg>
<div class="t" style="left:153.50px;top:410.73px;font-size:8.30px;line-height:8.30px;color:#3a3a3a;transform:scaleX(0.893);-webkit-text-stroke:0px currentColor;">Water supply maintenance survey</div>
<div class="a" style="left:433.8px;top:408.76px;width:52px;height:12px;border-radius:4px;background:#eef2fb"></div>
<svg class="a" style="left:436px;top:412.36px" width="6" height="6" viewBox="0 0 6 6"><circle cx="3" cy="2.75" r="2.6" fill="#5b88dc"/></svg>
<div class="t" style="left:444.16px;top:411.34px;font-size:7.35px;line-height:7.35px;color:#2a3242;transform:scaleX(0.895);">Ongoing</div>
<div class="t" style="left:572.80px;top:410.73px;font-size:8.30px;line-height:8.30px;color:#3a3a3a;transform:scaleX(0.862);-webkit-text-stroke:0px currentColor;">PRIVATE</div>
<div class="t" style="left:712.20px;top:410.73px;font-size:8.30px;line-height:8.30px;color:#3a3a3a;transform:scaleX(0.92);-webkit-text-stroke:0px currentColor;">2025-11-19</div>
<svg class="a" style="left:922.9px;top:410.16px" width="9.2" height="9.2" viewBox="0 0 9.2 9.2"><g fill="none" stroke="#505358" stroke-width="1.1"><circle cx="4.6" cy="4.6" r="3.95"/><path d="M4.6 4.1v2.8"/></g><circle cx="4.6" cy="2.75" r="0.6" fill="#505358"/></svg>
<svg class="a" style="left:942.6px;top:409.86px" width="8.6" height="10.6" viewBox="0 0 8.6 10.6"><path d="M0.7 2.7Q0.9 0.9 4.3 0.9Q7.7 0.9 7.9 2.7Z" fill="#d88893" stroke="#ad4453" stroke-width="0.85" stroke-linejoin="round"/><path d="M1.1 3.1H7.5L7.1 9.5Q7 10.2 6.3 10.2H2.3Q1.6 10.2 1.5 9.5Z" fill="#eaa2ab" stroke="#b44a5a" stroke-width="0.95" stroke-linejoin="round"/><path d="M4.3 4.4V8.9" stroke="#c86473" stroke-width="0.9"/></svg>
<div class="t" style="left:153.50px;top:438.09px;font-size:8.30px;line-height:8.30px;color:#3a3a3a;transform:scaleX(0.893);-webkit-text-stroke:0px currentColor;">Bengaluru Urban ISP Satisfaction &amp; Geospatial Analysis</div>
<div class="a" style="left:433.8px;top:436.12px;width:52px;height:12px;border-radius:4px;background:#f6f7f9"></div>
<svg class="a" style="left:436px;top:439.72px" width="6" height="6" viewBox="0 0 6 6"><circle cx="3" cy="2.75" r="2.6" fill="#6d7178"/></svg>
<div class="t" style="left:444.16px;top:438.70px;font-size:7.35px;line-height:7.35px;color:#333;transform:scaleX(0.895);">Inactive</div>
<div class="t" style="left:572.80px;top:438.09px;font-size:8.30px;line-height:8.30px;color:#3a3a3a;transform:scaleX(0.862);-webkit-text-stroke:0px currentColor;">PRIVATE</div>
<div class="t" style="left:712.20px;top:438.09px;font-size:8.30px;line-height:8.30px;color:#3a3a3a;transform:scaleX(0.92);-webkit-text-stroke:0px currentColor;">2025-11-19</div>
<svg class="a" style="left:922.9px;top:437.52px" width="9.2" height="9.2" viewBox="0 0 9.2 9.2"><g fill="none" stroke="#505358" stroke-width="1.1"><circle cx="4.6" cy="4.6" r="3.95"/><path d="M4.6 4.1v2.8"/></g><circle cx="4.6" cy="2.75" r="0.6" fill="#505358"/></svg>
<svg class="a" style="left:942.6px;top:437.22px" width="8.6" height="10.6" viewBox="0 0 8.6 10.6"><path d="M0.7 2.7Q0.9 0.9 4.3 0.9Q7.7 0.9 7.9 2.7Z" fill="#d88893" stroke="#ad4453" stroke-width="0.85" stroke-linejoin="round"/><path d="M1.1 3.1H7.5L7.1 9.5Q7 10.2 6.3 10.2H2.3Q1.6 10.2 1.5 9.5Z" fill="#eaa2ab" stroke="#b44a5a" stroke-width="0.95" stroke-linejoin="round"/><path d="M4.3 4.4V8.9" stroke="#c86473" stroke-width="0.9"/></svg>
<div class="t" style="left:153.50px;top:465.45px;font-size:8.30px;line-height:8.30px;color:#3a3a3a;transform:scaleX(0.893);-webkit-text-stroke:0px currentColor;">Add New Customer Locations</div>
<div class="a" style="left:433.8px;top:463.48px;width:52px;height:12px;border-radius:4px;background:#eef2fb"></div>
<svg class="a" style="left:436px;top:467.08px" width="6" height="6" viewBox="0 0 6 6"><circle cx="3" cy="2.75" r="2.6" fill="#5b88dc"/></svg>
<div class="t" style="left:444.16px;top:466.06px;font-size:7.35px;line-height:7.35px;color:#2a3242;transform:scaleX(0.895);">Ongoing</div>
<div class="t" style="left:572.80px;top:465.45px;font-size:8.30px;line-height:8.30px;color:#3a3a3a;transform:scaleX(0.862);-webkit-text-stroke:0px currentColor;">PRIVATE</div>
<div class="t" style="left:712.20px;top:465.45px;font-size:8.30px;line-height:8.30px;color:#3a3a3a;transform:scaleX(0.92);-webkit-text-stroke:0px currentColor;">2025-11-17</div>
<svg class="a" style="left:922.9px;top:464.88px" width="9.2" height="9.2" viewBox="0 0 9.2 9.2"><g fill="none" stroke="#505358" stroke-width="1.1"><circle cx="4.6" cy="4.6" r="3.95"/><path d="M4.6 4.1v2.8"/></g><circle cx="4.6" cy="2.75" r="0.6" fill="#505358"/></svg>
<svg class="a" style="left:942.6px;top:464.58px" width="8.6" height="10.6" viewBox="0 0 8.6 10.6"><path d="M0.7 2.7Q0.9 0.9 4.3 0.9Q7.7 0.9 7.9 2.7Z" fill="#d88893" stroke="#ad4453" stroke-width="0.85" stroke-linejoin="round"/><path d="M1.1 3.1H7.5L7.1 9.5Q7 10.2 6.3 10.2H2.3Q1.6 10.2 1.5 9.5Z" fill="#eaa2ab" stroke="#b44a5a" stroke-width="0.95" stroke-linejoin="round"/><path d="M4.3 4.4V8.9" stroke="#c86473" stroke-width="0.9"/></svg>
<div class="t" style="left:153.50px;top:492.81px;font-size:8.30px;line-height:8.30px;color:#3a3a3a;transform:scaleX(0.893);-webkit-text-stroke:0px currentColor;">Customer Maintain &amp; Feedback</div>
<div class="a" style="left:433.8px;top:490.84px;width:52px;height:12px;border-radius:4px;background:#f6f7f9"></div>
<svg class="a" style="left:436px;top:494.44px" width="6" height="6" viewBox="0 0 6 6"><circle cx="3" cy="2.75" r="2.6" fill="#6d7178"/></svg>
<div class="t" style="left:444.16px;top:493.42px;font-size:7.35px;line-height:7.35px;color:#333;transform:scaleX(0.895);">Inactive</div>
<div class="t" style="left:572.80px;top:492.81px;font-size:8.30px;line-height:8.30px;color:#3a3a3a;transform:scaleX(0.862);-webkit-text-stroke:0px currentColor;">PRIVATE</div>
<div class="t" style="left:712.20px;top:492.81px;font-size:8.30px;line-height:8.30px;color:#3a3a3a;transform:scaleX(0.92);-webkit-text-stroke:0px currentColor;">2025-11-17</div>
<svg class="a" style="left:922.9px;top:492.24px" width="9.2" height="9.2" viewBox="0 0 9.2 9.2"><g fill="none" stroke="#505358" stroke-width="1.1"><circle cx="4.6" cy="4.6" r="3.95"/><path d="M4.6 4.1v2.8"/></g><circle cx="4.6" cy="2.75" r="0.6" fill="#505358"/></svg>
<svg class="a" style="left:942.6px;top:491.94px" width="8.6" height="10.6" viewBox="0 0 8.6 10.6"><path d="M0.7 2.7Q0.9 0.9 4.3 0.9Q7.7 0.9 7.9 2.7Z" fill="#d88893" stroke="#ad4453" stroke-width="0.85" stroke-linejoin="round"/><path d="M1.1 3.1H7.5L7.1 9.5Q7 10.2 6.3 10.2H2.3Q1.6 10.2 1.5 9.5Z" fill="#eaa2ab" stroke="#b44a5a" stroke-width="0.95" stroke-linejoin="round"/><path d="M4.3 4.4V8.9" stroke="#c86473" stroke-width="0.9"/></svg>
<div class="a" style="left:1016px;top:503px;width:8px;height:8px;background:radial-gradient(circle at 100% 100%, rgba(70,110,140,.55) 0, rgba(120,160,190,.25) 3px, rgba(255,255,255,0) 7px)"></div>
<div class="a" style="left:1021px;top:0;width:3px;height:3px;background:radial-gradient(circle at 100% 0, rgba(90,90,90,.5) 0, rgba(255,255,255,0) 3px)"></div>
<div class="a" style="left:1018.8px;top:0;width:5.2px;height:443.4px;background:linear-gradient(90deg,#ececec,#f3f3f3)"></div>
<svg class="a" style="left:0;top:0" width="1024" height="511" viewBox="0 0 1024 511"><rect x="148" y="99.40" width="849.5" height="1" fill="#eeeeee"/><rect x="148" y="126.30" width="849.5" height="1" fill="#ececec"/><rect x="148" y="153.63" width="849.5" height="1" fill="#ececec"/><rect x="148" y="180.96" width="849.5" height="1" fill="#ececec"/><rect x="148" y="208.29" width="849.5" height="1" fill="#ececec"/><rect x="148" y="235.62" width="849.5" height="1" fill="#ececec"/><rect x="148" y="262.95" width="849.5" height="1" fill="#ececec"/><rect x="148" y="290.28" width="849.5" height="1" fill="#ececec"/><rect x="148" y="317.61" width="849.5" height="1" fill="#ececec"/><rect x="148" y="344.94" width="849.5" height="1" fill="#ececec"/><rect x="148" y="372.27" width="849.5" height="1" fill="#ececec"/><rect x="148" y="399.60" width="849.5" height="1" fill="#ececec"/><rect x="148" y="426.93" width="849.5" height="1" fill="#ececec"/><rect x="148" y="454.26" width="849.5" height="1" fill="#ececec"/><rect x="148" y="481.59" width="849.5" height="1" fill="#ececec"/><rect x="148" y="508.92" width="849.5" height="1" fill="#ececec"/></svg>
</body></html>
